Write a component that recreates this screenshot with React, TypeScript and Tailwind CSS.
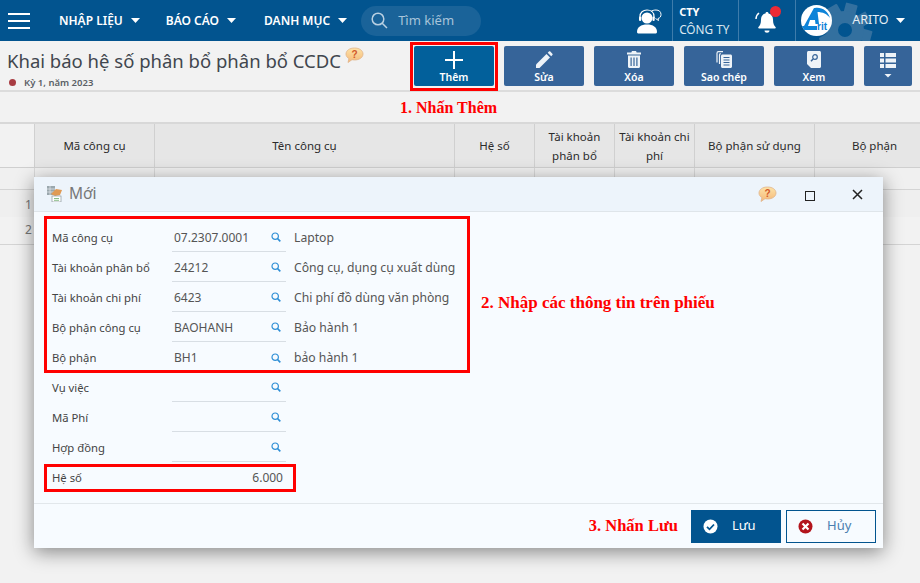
import React from "react";

const font = { fontFamily: '"Noto Sans", sans-serif' };

const Caret = () => (
  <svg width="9" height="5" viewBox="0 0 9 5" className="shrink-0"><path d="M0 0h9L4.500 5z" fill="currentColor" /></svg>
);

const HelpBubble = ({ className = "" }: { className?: string }) => (
  <svg width="19" height="17" viewBox="0 0 19 17" className={className}>
    <defs>
      <linearGradient id="hb" x1="0" y1="0" x2="0" y2="1">
        <stop offset="0" stopColor="#fde3a8" />
        <stop offset="1" stopColor="#f5b878" />
      </linearGradient>
    </defs>
    <path d="M9.500 1C14.500 1 18 3.600 18 7s-3.500 6-8.500 6c-.9 0-1.700-.1-2.500-.3L3 15.500l.9-3.900C2 10.500 1 8.900 1 7c0-3.400 3.500-6 8.500-6z" fill="url(#hb)" stroke="#e0b48a" strokeWidth=".8" />
    <text x="9.500" y="11" textAnchor="middle" fontSize="10" fontWeight="700" fill="#d2592a" fontFamily="Liberation Sans">?</text>
  </svg>
);

const SearchSmall = () => (
  <svg width="10" height="10" viewBox="0 0 10 10" className="shrink-0 mt-[1px]" fill="none" stroke="#2f8fd6">
    <circle cx="4.200" cy="4.200" r="3.200" strokeWidth="1.200" />
    <path d="M6.500 6.500L9.300 9.300" strokeWidth="1.700" />
  </svg>
);

const IconPlus = () => (
  <svg width="18" height="18" viewBox="0 0 18 18"><path d="M8 0h2v8h8v2h-8v8H8v-8H0V8h8z" fill="#fff" /></svg>
);
const IconPencil = () => (
  <svg width="18" height="18" viewBox="0 0 18 18" fill="#eef3f8">
    <path d="M1 13.500L11.500 3l3.500 3.500L4.500 17H1z" />
    <path d="M12.700 1.800l1.200-1.200c.4-.4 1-.4 1.400 0l2.100 2.100c.4.400.4 1 0 1.400l-1.200 1.200z" />
  </svg>
);
const IconTrash = () => (
  <svg width="14" height="17" viewBox="0 0 14 17" fill="#eef3f8">
    <path d="M5 0h4l.7 1.500H14V3.500H0V1.500h4.300z" />
    <path fillRule="evenodd" d="M1 4.500h12V15.500c0 .8-.6 1.500-1.500 1.500h-9C1.600 17 1 16.300 1 15.500zM3.500 6.500v8.500h1.200V6.500zM6.400 6.500v8.500h1.200V6.500zM9.300 6.500v8.500h1.200V6.500z" />
  </svg>
);
const IconCopy = () => (
  <svg width="16" height="17" viewBox="0 0 16 17" fill="none" stroke="#eef3f8">
    <path d="M7 .7H2.500C1.500.7 1 1.200 1 2.200v9.300" strokeWidth="1.200" />
    <path d="M3.500 13V4c0-.8.500-1.300 1.300-1.300" strokeWidth="1.200" />
    <path fill="#eef3f8" stroke="none" d="M6.500 3.500h8c.8 0 1.500.7 1.500 1.500v10.500c0 .8-.7 1.500-1.500 1.500h-8C5.700 17 5 16.300 5 15.500V5c0-.8.700-1.500 1.500-1.500z" />
    <path d="M7.500 6.500h6M7.500 9h6M7.500 11.500h6M7.500 14h6" stroke="#366499" strokeWidth="1" />
  </svg>
);
const IconView = () => (
  <svg width="14" height="17" viewBox="0 0 14 17">
    <path d="M1.500 0H12.500C13.300 0 14 .7 14 1.500v14c0 .8-.7 1.500-1.500 1.500H4l-4-4V1.500C0 .7.700 0 1.500 0z" fill="#eef3f8" />
    <circle cx="8" cy="6" r="2.300" fill="none" stroke="#366499" strokeWidth="1.200" />
    <path d="M6.300 7.800L4 10.300" stroke="#366499" strokeWidth="1.500" />
  </svg>
);
const IconList = () => (
  <svg width="16" height="26" viewBox="0 0 16 26" fill="#eef3f8">
    <path d="M0 0h4v4H0zM5.500 0H16v4H5.500zM0 5.500h4v4H0zM5.500 5.500H16v4H5.500zM0 11h4v4H0zM5.500 11H16v4H5.500z" />
    <path d="M4.500 21h7L8 24.500z" />
  </svg>
);

const Gear = () => (
  <svg width="60" height="60" viewBox="-30 -30 60 60" fill="#33709f" className="absolute left-[19px] top-0">
    {[0, 45, 90, 135, 180, 225, 270, 315].map((a) => (
      <rect key={a} x="-6" y="-27" width="12" height="12" rx="1" transform={`rotate(${a + 15})`} />
    ))}
    <path fillRule="evenodd" d="M0-19a19 19 0 110 38 19 19 0 010-38zM0-7a7 7 0 100 14 7 7 0 000-14z" />
  </svg>
);

const ToolBtn = ({ icon, label, active, className = "" }: { icon: React.ReactNode; label: string; active?: boolean; className?: string }) => (
  <div className={`w-20 h-10 rounded-[2px] flex flex-col items-center justify-end pb-[2px] text-white text-[10.500px] font-semibold leading-[14px] ${active ? "bg-[#02609b]" : "bg-[#366499]"} ${className}`}>
    <div className="h-[21px] flex items-center justify-center">{icon}</div>
    <span>{label}</span>
  </div>
);

const columns = [
  { w: "w-[34px]", label: "" },
  { w: "w-[120px]", label: "Mã công cụ" },
  { w: "w-[300px]", label: "Tên công cụ" },
  { w: "w-[80px]", label: "Hệ số" },
  { w: "w-[80px]", label: "Tài khoản phân bổ" },
  { w: "w-[80px]", label: "Tài khoản chi phí" },
  { w: "w-[120px]", label: "Bộ phận sử dụng" },
  { w: "w-[120px]", label: "Bộ phận" },
];

const fields = [
  ["Mã công cụ", "07.2307.0001", "Laptop"],
  ["Tài khoản phân bổ", "24212", "Công cụ, dụng cụ xuất dùng"],
  ["Tài khoản chi phí", "6423", "Chi phí đồ dùng văn phòng"],
  ["Bộ phận công cụ", "BAOHANH", "Bảo hành 1"],
  ["Bộ phận", "BH1", "bảo hành 1"],
];
const extra = ["Vụ việc", "Mã Phí", "Hợp đồng"];

const Row = ({ label, value, desc, last }: { label: string; value?: string; desc?: string; last?: boolean }) => (
  <div className="flex h-[30px] items-center">
    <div className="w-[120px] shrink-0 text-[11.300px] text-[#444] pt-[2px]">{label}</div>
    <div className={`w-[114px] shrink-0 h-full flex items-center pl-[2px] pr-[5px] justify-between ${last ? "" : "border-b border-[#d8dee4]"}`}>
      <span className="text-[12px] text-[#555] pt-[2px]">{value}</span>
      <SearchSmall />
    </div>
    {desc && <div className="ml-[8px] text-[12.200px] text-[#555] whitespace-nowrap pt-[2px]">{desc}</div>}
  </div>
);

const annot = "font-bold text-[#f00] leading-5 whitespace-nowrap";
const serif = { fontFamily: '"Liberation Serif", serif' };
const navItem = "flex items-center gap-[8px] text-[12px] font-semibold";

export default function App() {
  return (
    <div className="relative w-[920px] h-[583px] overflow-hidden bg-[#f2f2f2]" style={font}>
      {/* Header */}
      <div className="h-[41px] bg-[#02548f] flex items-center text-white relative overflow-hidden">
        <div className="ml-[8px] w-[22px] flex flex-col gap-[5px]">
          <div className="h-[2px] bg-white" />
          <div className="h-[2px] bg-white" />
          <div className="h-[2px] bg-white" />
        </div>
        <div className={`ml-[29px] ${navItem}`}><span>NHẬP LIỆU</span><Caret /></div>
        <div className={`ml-[26px] ${navItem}`}><span>BÁO CÁO</span><Caret /></div>
        <div className={`ml-[28px] ${navItem}`}><span>DANH MỤC</span><Caret /></div>
        <div className="ml-[14px] w-[120px] h-[30px] rounded-full bg-[#1a6399] flex items-center pl-[10px] gap-[10px]">
          <svg width="17" height="17" viewBox="0 0 17 17" fill="none" stroke="#b9d0e2" strokeWidth="1.500"><circle cx="7" cy="7" r="5.800" /><path d="M11.200 11.200L16 16" /></svg>
          <span className="text-[13px] text-[#a8c4da]">Tìm kiếm</span>
        </div>
        <div className="ml-[150px] w-[36px] flex justify-center">
          <svg width="26" height="26" viewBox="0 0 26 26" fill="#fff">
            <circle cx="11" cy="10" r="5.500" />
            <path d="M1 24c0-5 4-7.500 10-7.500S21 19 21 24c0 1-1 1.500-2 1.500H3c-1 0-2-.5-2-1.500z" />
            <path d="M4 10V8.500C4 4.500 7 2 11 2s7 2.500 7 6.500V10" fill="none" stroke="#fff" strokeWidth="1.200" />
            <rect x="3" y="8.500" width="2.200" height="4.500" rx="1" />
            <rect x="16.500" y="8.500" width="2.200" height="4.500" rx="1" />
            <path d="M15 3.500c1-1 3-1.500 5-1.500 3 0 5 1.700 5 4.500 0 2-1 3.500-3 4l.5 2-3-2" fill="none" stroke="#fff" strokeWidth="1" />
          </svg>
        </div>
        <div className="ml-[5px] w-[66px] h-full border-l border-[#3e7cab] pl-[6px] flex flex-col justify-center shrink-0">
          <div className="text-[11px] font-bold leading-[14px]">CTY</div>
          <div className="text-[11.800px] leading-[16px] text-[#dbe7f1] mt-[2px]">CÔNG TY</div>
        </div>
        <div className="w-[58px] h-full border-l border-r border-[#3e7cab] relative flex items-center justify-center shrink-0">
          <svg width="24" height="26" viewBox="0 0 24 26" fill="#fff" className="mt-[2px]">
            <path d="M12 3c-.9 0-1.500.6-1.500 1.400C7.500 5 6 7.500 6 10.500c0 4-1 6-2.500 7.500-.6.6-.2 1.500.6 1.500h15.800c.8 0 1.200-.9.6-1.500C19 16.500 18 14.500 18 10.500c0-3-1.500-5.500-4.500-6.100C13.500 3.600 12.900 3 12 3z" />
            <path d="M9.500 21.500h5c0 1.300-1.100 2.300-2.500 2.300s-2.500-1-2.500-2.300z" />
            <path d="M1 10c0-2.500 1-4.500 3-6" fill="none" stroke="#fff" strokeWidth="1.500" />
          </svg>
          <div className="absolute left-[31px] top-[6px] w-[11px] h-[11px] rounded-full bg-[#ee2a35]" />
        </div>
        <div className="flex-1 h-full relative flex items-center">
          <Gear />
          <div className="relative ml-[5px] w-[31px] h-[31px] rounded-full bg-white overflow-hidden">
            <svg width="31" height="31" viewBox="0 0 31 31">
              <path d="M3 21L13 3h3l2 16h-3.500l-.5-4H9l-2 6z" fill="#0d83d8" />
              <path d="M14 3c7-1 13 3 15 10-3-4-7-6-13-6z" fill="#0d83d8" />
              <path d="M0 21h16v4H0z" fill="#0d83d8" />
              <text x="16" y="25" fontSize="10" fontWeight="700" fill="#0d83d8" fontFamily="Liberation Sans">rit</text>
            </svg>
          </div>
          <span className="relative ml-[20px] text-[12.500px] text-[#e6eef5]">ARITO</span>
          <span className="relative ml-[7px]"><Caret /></span>
        </div>
      </div>

      {/* Title + toolbar */}
      <div className="h-[51px] border-b-2 border-[#dcdcdc] flex relative">
        <div className="pl-[7px] pt-[6px] w-[414px] shrink-0">
          <div className="flex items-start">
            <span className="text-[18.500px] leading-[27px] text-[#41464e] whitespace-nowrap">Khai báo hệ số phân bổ phân bổ CCDC</span>
            <HelpBubble className="ml-[4px]" />
          </div>
          <div className="flex items-center text-[9.500px] font-semibold text-[#5a5f66] leading-[13px] mt-[2px]">
            <span className="w-[7px] h-[7px] rounded-full bg-[#a83c42] ml-[2px] mr-[8px]" />
            Kỳ 1, năm 2023
          </div>
        </div>
        <div className="flex gap-[10px] pt-[5px]">
          <ToolBtn active icon={<IconPlus />} label="Thêm" />
          <ToolBtn icon={<IconPencil />} label="Sửa" />
          <ToolBtn icon={<IconTrash />} label="Xóa" />
          <ToolBtn icon={<IconCopy />} label="Sao chép" />
          <ToolBtn icon={<IconView />} label="Xem" />
          <div className="w-12 h-10 rounded-[2px] bg-[#366499] flex items-center justify-center"><IconList /></div>
        </div>
        {/* red highlight on Thêm */}
        <div className="absolute left-[410px] top-[1px] w-[88px] h-[49px] border-[3px] border-[#f00]" />
      </div>

      {/* Annotation */}
      <div className="h-[30px] pl-[400px] pt-[1px] flex items-center">
        <span className={`${annot} text-[16px]`} style={serif}>1. Nhấn Thêm</span>
      </div>

      {/* Table */}
      <div className="border-t-2 border-[#d8d8d8] overflow-hidden">
        <div className="flex h-[44px] w-[954px] bg-[#e6e6e6] border-b border-[#cfcfcf]">
          {columns.map((c, i) => (
            <div key={i} className={`${c.w} shrink-0 ${i ? "border-l border-[#d0d0d0] bg-[#e6e6e6]" : "bg-[#f2f2f2]"} flex items-center justify-center text-center text-[11.500px] leading-[19px] text-[#2b2b2b]`}>
              {c.label}
            </div>
          ))}
        </div>
        <div className="flex h-[22px] w-[954px] border-b border-[#d4d4d4] bg-[#f0f0f0]">
          {columns.map((c, i) => <div key={i} className={`${c.w} shrink-0 ${i ? "border-l border-[#d8d8d8]" : ""}`} />)}
        </div>
        <div className="h-[27px] bg-[#efefef] pl-[25px] pt-[6px] text-[12px] text-[#777]">1</div>
        <div className="h-[28px] border-b border-[#d4d4d4] pl-[25px] pt-[4px] text-[12px] text-[#777]">2</div>
      </div>

      {/* Modal */}
      <div className="absolute left-[34px] top-[177px] w-[849px] h-[371px] bg-[#f7fbff] flex flex-col shadow-[0_4px_18px_rgba(0,0,0,0.45)]">
        <div className="h-[35px] shrink-0 bg-[#edf4fb] border-b border-[#dfe5ea] flex items-center pl-[13px] pr-[20px]">
          <svg width="16" height="16" viewBox="0 0 16 16">
            <rect x="0" y="0" width="8" height="9" fill="#9aa7ad" />
            <path d="M0 3h8M0 6h8M3 0v9" stroke="#e6ebee" strokeWidth=".7" />
            <path d="M4 8l5-5 6 1-2 5-5 1z" fill="#e09a55" />
            <rect x="5" y="10" width="9" height="6" fill="#fff" stroke="#8a959b" strokeWidth=".7" />
            <path d="M7 12.500h5M7 14.300h5" stroke="#6aa96a" strokeWidth=".8" />
          </svg>
          <span className="ml-[6px] text-[15.500px] text-[#777]">Mới</span>
          <div className="flex-1" />
          <HelpBubble className="mr-[28px] mt-[1px]" />
          <div className="w-[10px] h-[10px] border border-[#222] mr-[37px] mt-[3px]" />
          <svg width="11" height="11" viewBox="0 0 11 11" stroke="#222" strokeWidth="1.500"><path d="M1 1l9 9M10 1l-9 9" /></svg>
        </div>

        <div className="flex-1 pl-[10px] pt-[4px]">
          <div className="w-[426px] h-[157px] border-[3px] border-[#f00] pl-[5px] pt-[3px] relative">
            {fields.map((f, i) => <Row key={i} label={f[0]} value={f[1]} desc={f[2]} last={i === 4} />)}
            <div className={`absolute left-[434px] top-[74px] ${annot} text-[17px]`} style={serif}>2. Nhập các thông tin trên phiếu</div>
          </div>
          <div className="pl-[8px] -mt-[1px]">
            {extra.map((l) => <Row key={l} label={l} />)}
          </div>
          <div className="w-[252px] h-[28px] mt-[2px] border-[3px] border-[#f00] pl-[5px] pr-[10px] flex items-center justify-between">
            <span className="text-[#444] text-[11.300px]">Hệ số</span>
            <span className="text-[#555] text-[12px]">6.000</span>
          </div>
        </div>

        <div className="h-[45px] shrink-0 border-t border-[#e2e7eb] flex items-center justify-end pr-[7px]">
          <span className={`${annot} mr-[13px] text-[16.500px]`} style={serif}>3. Nhấn Lưu</span>
          <div className="w-[90px] h-[33px] bg-[#02548f] text-white flex items-center pl-[12px] text-[13px] mr-[5px]">
            <svg width="15" height="15" viewBox="0 0 15 15"><circle cx="7.500" cy="7.500" r="7" fill="#fff" /><path d="M4 7.800l2.500 2.500L11 5.500" fill="none" stroke="#02548f" strokeWidth="1.800" /></svg>
            <span className="ml-[14px]">Lưu</span>
          </div>
          <div className="w-[90px] h-[33px] border border-[#02548f] text-[#4a7fb0] flex items-center pl-[11px] text-[13px]">
            <svg width="15" height="15" viewBox="0 0 15 15"><circle cx="7.500" cy="7.500" r="7" fill="#b3141c" /><path d="M4.500 4.500l6 6M10.500 4.500l-6 6" stroke="#fff" strokeWidth="2.200" /></svg>
            <span className="ml-[14px]">Hủy</span>
          </div>
        </div>
      </div>
    </div>
  );
}
